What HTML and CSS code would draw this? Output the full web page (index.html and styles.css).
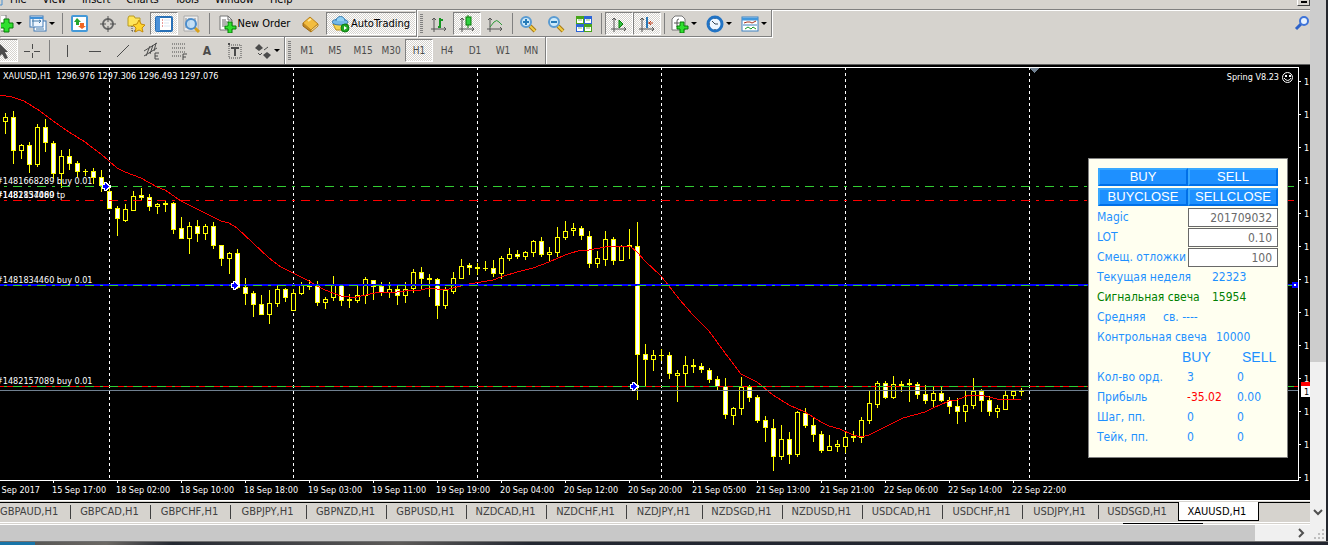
FILE: index.html
```html
<!DOCTYPE html>
<html lang="en">
<head>
<meta charset="utf-8">
<title>XAUUSD,H1</title>
<link rel="stylesheet" href="styles.css">
</head>
<body>
<div class="viewer">
<main class="terminal">
  <nav class="menubar">
    <svg class="menu-logo" width="4" height="9"><path d="M0 5h2v-5" fill="none" stroke="#4a90d0"/></svg>
    <a href="#">File</a><a href="#">View</a><a href="#">Insert</a><a href="#">Charts</a><a href="#">Tools</a><a href="#">Window</a><a href="#">Help</a>
    <button class="restore" aria-label="Minimize chart"></button>
  </nav>

  <div class="toolbar">
    <div class="group">
      <button class="first-tool" aria-label="New chart"><svg width="13" height="18"><path d="M0 0h5v16H0" fill="#fff" stroke="#777"/><path d="M3 4h5v4h4v5H8v4H3v-4H-1V8h4z" fill="#2fe02f" stroke="#087a08"/></svg><i class="caret"></i></button>
      <button class="drop" aria-label="Profiles"><svg width="18" height="18"><rect x="5" y="6" width="12" height="10" fill="#fff" stroke="#3f78b4"/><rect x="1" y="1" width="13" height="11" fill="#eef6ff" stroke="#3f78b4"/><path d="M1 3h13" stroke="#3f90d8" stroke-width="2"/><path d="M4 4v7M3 6h9M10 5l2 1-2 2M7 14h8" fill="none" stroke="#4178a8"/></svg><i class="caret"></i></button>
      <span class="sep"></span>
      <button class="tool" aria-label="Market Watch"><svg width="18" height="18"><rect x="1" y="1" width="15" height="15" rx="1" fill="#fff" stroke="#4499d8" stroke-width="2"/><path d="M6 3l4 4H8v3H5V7H3z" fill="#25a52b"/><path d="M11 14l-4-3h2V8h4v3h2z" fill="#f16722"/></svg></button>
      <button class="tool" aria-label="Data Window"><svg width="18" height="18"><circle cx="9" cy="9" r="5" fill="none" stroke="#666" stroke-width="2"/><path d="M9 1v6M9 11v6M1 9h6M11 9h6" stroke="#555"/></svg></button>
      <button class="tool" aria-label="Navigator"><svg width="18" height="18"><path d="M1 3l1-2h5l1 2h5v8H1z" fill="#ffe55a" stroke="#b79a22"/><path d="M5 11v6M5 16h4" stroke="#444" stroke-dasharray="1 1"/><path d="M12 5l2 4 4 1-3 3 1 4-4-2-4 2 1-4-3-3 4-1z" fill="#ffd52e" stroke="#c58b0a"/></svg></button>
      <button class="tool pressed" aria-label="Terminal"><svg width="18" height="16"><rect x="1" y="1" width="16" height="14" rx="1" fill="#fff" stroke="#2870b6" stroke-width="2"/><path d="M3 1v14" stroke="#4a90d8" stroke-width="4"/><path d="M7 4h1M7 7h1M7 10h1" stroke="#c33"/><path d="M9 4h6M9 7h5M9 10h6" stroke="#d9e6f3"/></svg></button>
      <button class="tool" aria-label="Strategy Tester"><svg width="18" height="18"><path d="M1 1h14v15H1z" fill="#eee" stroke="#aaa"/><path d="M3 3v10M6 3v10M12 3v10" stroke="#888"/><path d="M11 12l5 5" stroke="#d9a11b" stroke-width="3"/><circle cx="8" cy="9" r="5" fill="#b9dcf7" fill-opacity=".8" stroke="#4b8dcc" stroke-width="2"/></svg></button>
      <span class="sep"></span>
      <button class="new-order"><svg width="18" height="18"><path d="M1 1h8l4 4v10H1z" fill="#fff" stroke="#777"/><path d="M9 1v4h4M3 5h4M3 7h7M3 9h5M3 11h3" fill="none" stroke="#666"/><path d="M9 7h4v4h4v3h-4v4H9v-4H6v-3h3z" fill="#2fe02f" stroke="#087a08"/></svg>New Order</button>
      <button class="tool" aria-label="MetaEditor"><svg width="18" height="18"><path d="M2 8l7-6 8 7-7 6z" fill="#f3bd3f" stroke="#b9811c"/><path d="M2 8v3l8 6v-2" fill="#c48920" stroke="#996612"/><path d="M10 15l7-6v2l-7 6z" fill="#fff0b8" stroke="#b9811c"/><path d="M7 6l3-2" stroke="#ffe9a0" stroke-width="2"/></svg></button>
      <button class="auto pressed"><svg width="18" height="18"><path d="M1 9h15l-3 6H4z" fill="#f6d34e" stroke="#b98f1c"/><ellipse cx="8" cy="7" rx="8" ry="3" fill="#74b9e8" stroke="#397db2"/><path d="M4 6c0-6 9-6 9 0" fill="#8fd0f4" stroke="#397db2"/><circle cx="13" cy="13" r="4" fill="#20a824" stroke="#0d7f13"/><path d="M12 11l3 2-3 2z" fill="#fff"/></svg>AutoTrading</button>
    </div>
    <div class="group">
      <span class="grip"></span>
      <button class="tool" aria-label="Bar chart"><svg width="18" height="18"><use href="#axes"/><path d="M10 3v10M8 12h2M10 5h3" stroke="#159522" stroke-width="2"/></svg></button>
      <button class="tool pressed" aria-label="Candlesticks"><svg width="18" height="18"><use href="#axes"/><path d="M10 0v13" stroke="#087a08"/><rect x="8" y="2" width="5" height="8" fill="#30d040" stroke="#087a08"/></svg></button>
      <button class="tool" aria-label="Line chart"><svg width="18" height="18"><use href="#axes"/><path d="M4 12L8 7q3-3 5 0l3 3" fill="none" stroke="#2b9a37"/></svg></button>
      <span class="sep thin"></span>
      <button class="tool" aria-label="Zoom in"><svg width="18" height="18"><use href="#lens"/><path d="M4 7h6M7 4v6" stroke="#277bb8" stroke-width="2"/></svg></button>
      <button class="tool" aria-label="Zoom out"><svg width="18" height="18"><use href="#lens"/><path d="M4 7h6" stroke="#277bb8" stroke-width="2"/></svg></button>
      <button class="tool" aria-label="Tile windows"><svg width="18" height="18"><path d="M1 1h8v8H1zM9 9h8v8H9z" fill="#47a51a"/><path d="M9 1h8v8H9zM1 9h8v8H1z" fill="#2c65d6"/><path d="M2 4h6v4H2zM10 4h6v4h-6zM2 12h6v4H2zM10 12h6v4h-6z" fill="#fff"/><path d="M3 5h4M11 5h4M3 13h4M11 13h4" stroke="#8bbf72"/></svg></button>
      <span class="sep"></span>
      <button class="tool pressed" aria-label="Auto scroll"><svg width="18" height="18"><use href="#axes"/><path d="M9 5l4 4-4 4z" fill="#30c043" stroke="#087a08"/></svg></button>
      <button class="tool pressed" aria-label="Chart shift"><svg width="18" height="18"><use href="#axes"/><path d="M9 2v11" stroke="#2878b8" stroke-width="2"/><path d="M15 8h-5M13 6l-2 2 2 2" fill="none" stroke="#c03c18"/></svg></button>
      <span class="sep thin"></span>
      <button class="drop" aria-label="Indicators"><svg width="18" height="18"><path d="M4 1h7l3 3v11H1V4z" fill="#fff" stroke="#777"/><path d="M6 12V6q0-2 2-2M3 8h5" fill="none" stroke="#555"/><path d="M9 7h4v4h4v3h-4v4H9v-4H6v-3h3z" fill="#2fe02f" stroke="#087a08"/></svg><i class="caret"></i></button>
      <button class="drop" aria-label="Periods"><svg width="18" height="18"><circle cx="9" cy="9" r="7" fill="#eef7ff" stroke="#2273c4" stroke-width="3"/><path d="M6 6l3 3h3M9 3v1M9 14v1M3 9h1" fill="none" stroke="#345"/></svg><i class="caret"></i></button>
      <button class="drop" aria-label="Templates"><svg width="18" height="18"><rect x="1" y="2" width="16" height="14" fill="#fff" stroke="#3f82bf"/><path d="M1 4h16" stroke="#4398dc" stroke-width="3"/><path d="M2 10h14" stroke="#3f82bf"/><path d="M3 8l3-1h3l2 1 4-2" fill="none" stroke="#a3321b"/><path d="M4 14l3-2 3 2 2-2 3 2" fill="none" stroke="#179725"/></svg><i class="caret"></i></button>
    </div>
    <button class="search" aria-label="Search"><svg width="16" height="16"><path d="M7 9l-5 5" stroke="#2e62c8" stroke-width="3"/><circle cx="10" cy="6" r="4" fill="#e9f3ff" stroke="#3f74d8" stroke-width="2"/></svg></button>
  </div>

  <div class="toolbar lower">
    <div class="group">
      <button class="cursor pressed" aria-label="Cursor"><svg width="10" height="18"><path d="M0 2l8 8H5l3 6-3 1-3-5-2 2z" fill="#4b4b4b"/></svg></button>
      <button class="tool" aria-label="Crosshair"><svg width="16" height="18" shape-rendering="crispEdges"><path d="M8 2v5M8 11v5M0 9h6M10 9h6" stroke="#4b4b4b"/></svg></button>
      <span class="sep"></span>
      <button class="tool" aria-label="Vertical line"><svg width="18" height="18" shape-rendering="crispEdges"><path d="M9 3v12" stroke="#4b4b4b"/></svg></button>
      <button class="tool" aria-label="Horizontal line"><svg width="18" height="18" shape-rendering="crispEdges"><path d="M3 9h12" stroke="#4b4b4b"/></svg></button>
      <button class="tool" aria-label="Trendline"><svg width="18" height="18"><path d="M3 15L15 3" stroke="#4b4b4b"/></svg></button>
      <button class="tool" aria-label="Channel"><svg width="18" height="18"><path d="M2 9L15 1M2 14L15 6M4 14L8 4M8 12l3-9M12 9l2-8" stroke="#4b4b4b"/><path d="M17 11h-4v6h4M13 14h3" fill="none" stroke="#4b4b4b"/></svg></button>
      <button class="tool" aria-label="Fibonacci"><svg width="18" height="18"><path d="M2 2h14M2 6h14M2 10h14M2 14h9" stroke="#4b4b4b" stroke-dasharray="1 1"/><path d="M13 18v-6h4M13 15h3" fill="none" stroke="#4b4b4b"/></svg></button>
      <button class="tool letter">A</button>
      <button class="tool" aria-label="Text label"><svg width="18" height="18"><path d="M3 3h12v13H3z" fill="none" stroke="#4b4b4b" stroke-dasharray="1 1"/><path d="M2 2h2M5 6h8M9 6v8" fill="none" stroke="#4b4b4b" stroke-width="2"/></svg></button>
      <button class="drop" aria-label="Arrows"><svg width="18" height="18"><path d="M1 6l4-4 4 4-4 3zM9 13l4-3 4 3-4 4z" fill="#4b4b4b"/><path d="M4 11l2 2 2-2M10 8l4-3" fill="none" stroke="#4b4b4b"/></svg><i class="caret"></i></button>
    </div>
    <div class="group periods">
      <span class="grip"></span>
      <button>M1</button><button>M5</button><button>M15</button><button>M30</button><button class="pressed">H1</button><button>H4</button><button>D1</button><button>W1</button><button>MN</button>
    </div>
  </div>

  <section class="chart">
    <div class="plot">
      <svg class="canvas" id="canvas" width="100%" height="100%" shape-rendering="crispEdges">
        <g id="layer"></g>
      </svg>
      <span class="handle"></span>
      <span class="quote">XAUUSD,H1&nbsp; 1296.976 1297.306 1296.493 1297.076</span>
      <span class="expert">Spring V8.23 <svg width="11" height="11"><circle cx="5" cy="5" r="5" fill="none" stroke="#fff" transform="translate(.5 .5)"/><path d="M3 3h2v2H3zM7 3h2v2H7z" fill="#fff"/><path d="M2 6q4 5 7 0" fill="none" stroke="#fff"/></svg></span>
      <form class="panel">
        <div class="pair"><button type="button">BUY</button><button type="button">SELL</button></div>
        <div class="pair"><button type="button">BUYCLOSE</button><button type="button">SELLCLOSE</button></div>
        <div class="field"><label for="magic">Magic</label><input id="magic" value="201709032"></div>
        <div class="field"><label for="lot">LOT</label><input id="lot" value="0.10"></div>
        <div class="field"><label for="shift">Смещ. отложки</label><input id="shift" value="100"></div>
        <div class="note"><span>Текущая неделя</span><span>22323</span></div>
        <div class="note signal"><span>Сигнальная свеча</span><span>15954</span></div>
        <div class="note average"><span>Средняя</span><span>св. ----</span></div>
        <div class="note control"><span>Контрольная свеча</span><span>10000</span></div>
        <table class="totals">
          <colgroup><col class="name"><col class="buy"><col></colgroup>
          <tr class="sides"><td></td><th>BUY</th><th>SELL</th></tr>
          <tr><td>Кол-во орд.</td><td>3</td><td>0</td></tr>
          <tr><td>Прибыль</td><td class="loss">-35.02</td><td>0.00</td></tr>
          <tr><td>Шаг, пп.</td><td>0</td><td>0</td></tr>
          <tr><td>Тейк, пп.</td><td>0</td><td>0</td></tr>
        </table>
      </form>
    </div>
    <div class="prices"><svg id="prices" width="100%" height="100%" shape-rendering="crispEdges"></svg></div>
    <div class="times"><span class="cut">15 Sep 2017</span><span>15 Sep 17:00</span><span>18 Sep 02:00</span><span>18 Sep 10:00</span><span>18 Sep 18:00</span><span>19 Sep 03:00</span><span>19 Sep 11:00</span><span>19 Sep 19:00</span><span>20 Sep 04:00</span><span>20 Sep 12:00</span><span>20 Sep 20:00</span><span>21 Sep 05:00</span><span>21 Sep 13:00</span><span>21 Sep 21:00</span><span>22 Sep 06:00</span><span>22 Sep 14:00</span><span>22 Sep 22:00</span></div>
  </section>

  <nav class="tabs">
    <a class="lead" href="#">GBPAUD,H1</a><a href="#">GBPCAD,H1</a><a href="#">GBPCHF,H1</a><a class="short" href="#">GBPJPY,H1</a><a href="#">GBPNZD,H1</a><a href="#">GBPUSD,H1</a><a href="#">NZDCAD,H1</a><a href="#">NZDCHF,H1</a><a class="short" href="#">NZDJPY,H1</a><a href="#">NZDSGD,H1</a><a href="#">NZDUSD,H1</a><a href="#">USDCAD,H1</a><a href="#">USDCHF,H1</a><a class="short" href="#">USDJPY,H1</a><a class="last" href="#">USDSGD,H1</a><a class="active" href="#">XAUUSD,H1</a>
  </nav>
  <div class="ledge"><span></span></div>
</main>
<div class="vscroll"><span class="vthumb"></span><svg width="16" height="24"><path d="M4 9l4 4 4-4" fill="none" stroke="#505050" stroke-width="2"/></svg></div>
<div class="hscroll"><span class="hthumb"></span><svg width="18" height="16"><path d="M7 4l4 4-4 4" fill="none" stroke="#505050" stroke-width="2"/></svg></div>
<div class="corner"><svg width="16" height="16"><path d="M12 4h2v2h-2zM8 8h2v2H8zM12 8h2v2h-2zM4 12h2v2H4zM8 12h2v2H8zM12 12h2v2h-2z" fill="#bfbfbf"/></svg></div>
</div>
<div class="desktop"><span></span></div>

<svg width="0" height="0" class="defs">
  <defs>
    <g id="axes"><path d="M4 3v14M1 14h15M2 5l2-2 2 2M14 12l2 2-2 2" fill="none" stroke="#555"/></g>
    <g id="lens"><path d="M11 11l5 5" stroke="#a87a14" stroke-width="4"/><path d="M11 11l5 5" stroke="#f3cd45" stroke-width="2"/><circle cx="7" cy="7" r="5" fill="#cdeafa" stroke="#5a9bd2" stroke-width="2"/></g>
  </defs>
</svg>
<script src="chart.js"></script>
</body>
</html>
```
FILE: styles.css
```css
* { box-sizing: border-box; }

body {
  margin: 0;
  height: 100vh;
  display: flex;
  flex-direction: column;
  overflow: hidden;
  background: #23262d;
  font: 11px/14px "DejaVu Sans Condensed", "DejaVu Sans", sans-serif;
  color: #000;
}

button, input { font: inherit; margin: 0; }
a { color: inherit; text-decoration: none; }
svg { display: block; flex: none; }
.defs { position: absolute; }

.viewer {
  flex: 1;
  min-height: 0;
  margin-right: 2px;
  display: grid;
  grid-template-columns: minmax(0, 1fr) 16px;
  grid-template-rows: minmax(0, 1fr) 16px;
}

.terminal {
  display: flex;
  flex-direction: column;
  min-height: 0;
  background: #d6d3ce;
}

/* menu */
.menubar {
  height: 9px;
  display: flex;
  align-items: flex-end;
  gap: 16px;
  overflow: hidden;
  flex: none;
}
.menubar a { height: 14px; line-height: 14px; margin-bottom: 2px; }
.menu-logo { margin-right: -10px; }
.restore {
  margin-left: auto;
  align-self: flex-start;
  width: 13px;
  height: 6px;
  padding: 0;
  border: 1px solid #404040;
  border-top: 0;
  border-left-color: #fff;
  background: linear-gradient(#000, #000) 3px 1px / 6px 2px no-repeat #d6d3ce;
}

/* toolbars */
.toolbar {
  height: 28px;
  flex: none;
  display: flex;
  border-top: 1px solid #808080;
  box-shadow: inset 0 1px #fff;
}
.toolbar.lower { height: 27px; border-top: 0; box-shadow: none; }
.group {
  display: flex;
  align-items: center;
  padding-top: 1px;
  border-right: 1px solid #808080;
  border-bottom: 1px solid #808080;
  box-shadow: 1px 1px #fff;
  margin-right: 1px;
}
.lower .group { border-bottom: 0; box-shadow: 1px 0 #fff; padding-top: 0; }
.group button, .search {
  display: flex;
  align-items: center;
  justify-content: center;
  flex: none;
  height: 23px;
  padding: 0;
  border: 1px solid transparent;
  background: none;
  color: #000;
  white-space: nowrap;
}
.group .tool { width: 28px; }
.group .pressed {
  border-color: #808080 #fff #fff #808080;
  background: repeating-conic-gradient(#fff 0 25%, #d6d3ce 0 50%) 0 0 / 2px 2px;
}
.group .first-tool { width: 24px; justify-content: flex-start; gap: 2px; }
.group .drop { width: 35px; gap: 2px; }
.caret {
  border: 3px solid transparent;
  border-top-color: #000;
  border-bottom: 0;
}
.sep { width: 7px; height: 21px; background: linear-gradient(#808080, #808080) 3px 0 / 1px 100% no-repeat; }
.sep.thin { width: 5px; }
.grip {
  width: 7px;
  height: 20px;
  background: repeating-linear-gradient(#808080 0 1px, transparent 1px 2px) 2px 0 / 3px 100% no-repeat;
}
.group .new-order { width: 83px; gap: 1px; }
.group .auto { width: 90px; margin-left: 2px; gap: 1px; }
.search { margin-left: auto; width: 16px; margin-top: 1px; }
.group .cursor { width: 18px; justify-content: flex-start; border-left: 0; }
.group .letter { color: #4b4b4b; font-size: 12px; font-weight: bold; }
.periods button { width: 28px; color: #4b4b4b; font-size: 10px; }

/* chart */
.chart {
  flex: 1;
  min-height: 0;
  display: grid;
  grid-template-columns: minmax(0, 1fr) 11px;
  grid-template-rows: minmax(0, 1fr) 19px;
  padding-top: 2px;
  border-top: 1px solid #606060;
  background: #000;
  color: #fff;
  font-size: 9px;
}
.plot {
  position: relative;
  min-height: 0;
  border: 1px solid #fff;
  border-left: 0;
}
.handle {
  position: absolute;
  right: 0;
  top: 214px;
  width: 6px;
  height: 6px;
  border: 2px solid #00f;
  background: #fff;
}
.quote { position: absolute; left: 3px; top: 1px; }
.expert { position: absolute; right: 5px; top: 2px; display: flex; gap: 3px; align-items: center; }
.canvas text { fill: #fff; }
.prices { overflow: hidden; }
.prices text { fill: #fff; }
.prices .now { fill: #000; }
.times {
  grid-column: 1 / 3;
  display: flex;
  overflow: hidden;
  background: repeating-linear-gradient(90deg, transparent 0 53px, #fff 53px 54px, transparent 54px 64px) 0 0 / 1040px 2px no-repeat;
}
.times span { width: 64px; flex: none; padding-top: 2px; white-space: nowrap; }
.times .cut { width: 52px; display: flex; justify-content: flex-end; padding-right: 12px; }

/* expert panel */
.panel {
  position: absolute;
  right: 10px;
  top: 90px;
  width: 200px;
  padding: 8px 9px 10px 8px;
  border: 1px solid #808080;
  background: #fffff0;
  color: #1e90ff;
  font-size: 12px;
  line-height: 20px;
}
.pair { display: flex; height: 20px; padding: 1px 0 0 1px; }
.pair button {
  flex: 1;
  height: 18px;
  padding: 0;
  border: 2px solid #0070e8;
  border-color: #38a8ff #0070e8 #0070e8 #38a8ff;
  background: #1e90ff;
  color: #fff;
  font: 13px/14px "Liberation Sans", Arial, sans-serif;
}
.field { display: flex; height: 20px; }
.field label { width: 91px; flex: none; overflow: hidden; white-space: nowrap; }
.field input {
  margin-top: 1px;
  flex: 1;
  min-width: 0;
  border: 1px solid #696969;
  border-radius: 0;
  padding: 0 5px;
  background: #fff;
  color: #696969;
  line-height: 16px;
  text-align: right;
}
.note { display: flex; height: 20px; white-space: nowrap; }
.note span:first-child { width: 115px; }
.signal { color: #008000; }
.note.average span:first-child { width: 66px; }
.note.control span:first-child { width: 119px; }
.totals { width: 100%; border-collapse: collapse; table-layout: fixed; }
.totals .name { width: 90px; }
.totals .buy { width: 50px; }
.totals td, .totals th { height: 20px; padding: 0; text-align: left; white-space: nowrap; }
.totals .sides th { font: 14px/20px "Liberation Sans", Arial, sans-serif; text-indent: 5px; }
.totals .sides td + th { text-indent: -5px; }
.totals .loss { color: #f00; }

/* chart tabs */
.tabs {
  height: 22px;
  flex: none;
  display: flex;
  border-top: 1px solid #fff;
  background: linear-gradient(#000, #000) 0 1px / 100% 1px no-repeat;
  color: #404040;
  line-height: 15px;
}
.tabs a {
  width: 80px;
  height: 20px;
  padding: 3px 3px 0 0;
  text-align: center;
  white-space: nowrap;
  flex: none;
  background: linear-gradient(#404040, #404040) 100% 4px / 1px 14px no-repeat;
}
.tabs .lead { width: 71px; text-align: left; }
.tabs .short { width: 76px; }
.tabs .last { width: 79px; background: none; }
.tabs .active {
  width: 81px;
  height: 19px;
  margin-top: 1px;
  padding-top: 2px;
  border: 1px solid #000;
  border-top: 0;
  background: #fff;
  color: #000;
}
.ledge { height: 3px; flex: none; border-top: 1px solid #fff; border-bottom: 1px solid #fff; padding-left: 1123px; }
.ledge span { display: block; width: 80px; height: 1px; background: #000; }

/* outer scroll bars */
.vscroll { display: flex; flex-direction: column; justify-content: space-between; background: #f0f0f0; }
.vthumb { height: 69%; background: #cdcdcd; }
.hscroll { display: flex; justify-content: space-between; background: #f0f0f0; }
.hthumb { width: calc(100% - 55px); background: #c8c8c8; }
.corner { background: #f0f0f0; }
.desktop { height: 4px; flex: none; border-top: 1px solid #707070; background: linear-gradient(90deg, #50504f, #6b6864 8%, #252932 13%, #5d5b59 30%, #242832 40%, #22252f); }
.desktop span { display: block; width: 35px; height: 3px; background: #1874a8; }
```
FILE: chart.js
```js
// high, body top, body bottom, low, falling candle (1) or rising candle (0)
const candles = [
[113,117,121,133,0],[111,117,150,163,1],[144,145,150,158,0],[142,145,164,172,1],[124,127,164,166,0],[119,127,142,151,1],[141,143,173,178,1],[150,156,173,187,0],
[149,156,163,169,1],[161,163,171,176,1],[169,171,171,175,0],[168,171,177,183,1],[170,177,185,191,1],[186,191,208,208,1],[206,208,218,235,1],[204,209,220,221,0],
[191,196,210,210,0],[188,195,197,199,1],[194,197,206,210,1],[203,204,206,213,0],[200,203,204,211,1],[202,203,229,233,1],[217,228,238,238,1],[222,226,238,253,0],
[220,226,233,241,1],[224,226,233,239,0],[222,226,245,248,1],[245,245,258,265,1],[252,253,258,273,0],[249,253,287,288,1],[278,287,293,304,1],[291,293,304,316,1],
[295,304,314,314,1],[290,303,314,323,0],[284,289,303,306,0],[288,289,297,301,1],[289,293,310,310,0],[282,285,293,294,0],[280,285,286,289,1],[281,286,302,305,1],[297,299,302,308,0],
[276,284,297,300,0],[284,284,300,305,1],[294,299,300,307,1],[284,295,300,302,0],[277,279,295,303,0],[280,280,286,299,1],[282,286,292,295,1],[282,289,292,297,0],
[285,289,295,304,1],[282,289,295,302,0],[269,272,288,292,0],[267,272,278,288,1],[274,278,279,296,1],[278,279,305,318,1],[287,290,305,308,0],[272,278,291,293,0],
[259,266,278,278,0],[263,265,267,274,1],[263,267,268,274,1],[261,268,268,270,0],[260,268,273,276,1],[256,258,273,278,0],[248,254,258,260,0],[250,254,256,258,1],
[251,252,256,259,0],[240,241,252,256,0],[237,241,254,256,1],[247,252,254,260,0],[227,237,252,256,0],[221,231,237,239,0],[223,228,230,235,0],[226,228,235,239,1],
[231,236,263,267,1],[251,258,263,267,0],[231,239,259,265,0],[237,239,260,264,1],[245,246,260,260,0],[229,245,246,258,1],[222,246,354,399,1],
[344,354,359,386,1],[350,355,359,370,0],[349,355,355,360,0],[352,355,373,378,1],[370,373,375,401,0],[356,365,373,386,0],[359,365,366,372,1],[363,366,369,372,1],
[368,370,379,382,1],[376,379,386,389,1],[378,386,414,418,1],[407,408,415,424,0],[377,387,408,414,0],[385,387,397,401,1],[395,397,420,422,1],[416,420,427,441,1],
[419,428,456,470,1],[425,439,456,459,0],[432,439,454,463,1],[411,412,454,456,0],[408,413,425,427,1],[417,425,434,441,1],[431,434,450,452,1],[435,446,450,450,0],[440,444,446,451,0],
[432,437,446,452,0],[431,436,437,441,1],[417,420,437,442,0],[391,403,420,423,0],[381,383,404,407,0],[381,383,397,398,1],[376,384,397,398,0],[381,384,385,391,1],
[379,383,384,401,1],[382,384,394,398,1],[385,394,400,403,1],[387,393,400,407,0],[386,393,400,401,1],[397,400,406,413,1],[398,406,411,423,1],[390,405,411,421,0],
[378,391,405,408,0],[389,391,400,411,1],[396,400,411,415,1],[405,408,411,417,0],[391,395,409,409,0],[390,391,395,398,0],[388,390,391,395,1]];

const average = "0,95 12,97 24,101 40,111 53,121 69,132 85,142 101,154 109,161 117,168 125,172 141,178 157,187 165,190 181,201 197,209 213,217 221,221 229,223 237,228 253,243 269,258 281,267 293,273 309,281 317,286 325,290 333,293 341,296 350,297 357,297 370,294 381,292 397,292 413,290 421,290 429,288 445,290 453,288 461,286 469,284 493,280 501,277 517,272 533,268 549,262 565,255 581,250 589,250 605,247 621,246 630,246 637,252 645,261 661,276 680,300 693,315 709,331 725,353 741,374 757,382 773,395 789,405 805,412 821,422 829,426 840,429 853,435 861,437 869,435 885,427 903,418 925,412 933,408 949,401 957,400 969,395 981,395 997,399 1021,400";

const TOP = 68;
const WIDE = 4000;
const rect = (x, y, w, h, c) => `<rect x="${x}" y="${y}" width="${w}" height="${h}" fill="${c}"/>`;
const level = (y, c) => rect(0, y, WIDE, 1, c);
const dashed = (y, c) => {
  let s = "";
  for (let x = -11; x < WIDE; x += 24) s += rect(x, y, 9, 1, c) + rect(x + 15, y, 3, 1, c);
  return s;
};
const label = (y, t) => `<text x="-4" y="${y}">${t}</text>`;
const marker = (x, y) => `<g transform="translate(${x} ${y})"><path d="M-4-2h2v-2h3v1h1v1h1v1h2v3h-2v1h-1v1h-1v1h-3v-2h-2z" fill="#fff"/><path d="M-3-1h2v-2h1v1h1v1h1v1h1v1h-1v1h-1v1h-1v1h-1v-2h-2z" fill="#00f"/></g>`;

let out = "";
for (const x of [109, 293, 477, 661, 845, 1029])
  for (let y = 67; y < 1600; y += 6) out += rect(x, y, 1, 3, "#fff");
candles.forEach(([hi, top, bottom, lo, falling], i) => {
  const x = 5 + i * 8;
  out += rect(x, hi, 1, lo - hi + 1, "#ff0") + rect(x - 2, top, 5, bottom - top + 1, "#ff0");
  if (bottom - top > 1) out += rect(x - 1, top + 1, 3, bottom - top - 1, falling ? "#fff" : "#000");
});
out += `<polyline points="${average}" fill="none" stroke="#f00"/>`;
out += rect(0, 284, WIDE, 2, "#00f");
out += dashed(186, "#32cd32") + dashed(200, "#f00") + dashed(285, "#32cd32");
out += level(386, "#f00") + dashed(386, "#32cd32") + level(390, "#708090");
out += marker(106, 186) + marker(235, 285) + marker(634, 386);
out += label(184, "#1481668289 buy 0.01") + label(198, "#1482157089 tp") + label(198, "#1481834460") + label(283, "#1481834460 buy 0.01") + label(384, "#1482157089 buy 0.01");
out += `<path d="M1029 68h10l-5 5z" fill="#708090"/>`;
const layer = document.getElementById("layer");
layer.setAttribute("transform", `translate(0 ${-TOP})`);
layer.innerHTML = out;

let scale = "";
for (let y = 81; y < 2000; y += 33) scale += rect(0, y - 67, 2, 1, "#fff") + `<text x="5" y="${y - 63}">1</text>`;
scale += rect(2, 315, 9, 5, "#f00") + rect(2, 319, 9, 11, "#fff") + `<text class="now" x="5" y="328">1</text>`;
document.getElementById("prices").innerHTML = scale;
```
